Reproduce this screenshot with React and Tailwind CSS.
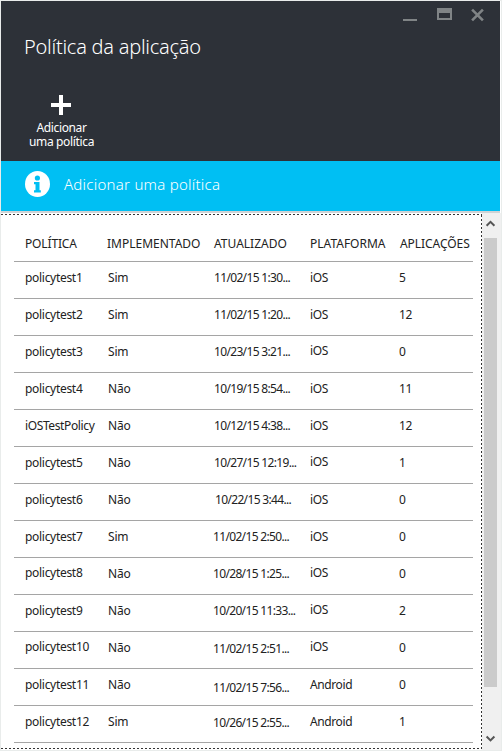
const COLS = "grid grid-cols-[83px_106px_96px_90px_1fr] pl-[11px]";

// nameC, dateC and osC fine-tune the position of single cells
const rows = [
  { name: "policytest1", on: "Sim", date: "11/02/15 1:30...", os: "iOS", apps: "5" },
  { name: "policytest2", on: "Sim", date: "11/02/15 1:20...", os: "iOS", apps: "12" },
  { name: "policytest3", on: "Sim", date: "10/23/15 3:21...", os: "iOS", apps: "0", osC: "-mt-px" },
  { name: "policytest4", on: "Não", date: "10/19/15 8:54...", os: "iOS", apps: "11" },
  { name: "iOSTestPolicy", on: "Não", date: "10/12/15 4:38...", os: "iOS", apps: "12", nameC: "tracking-[-0.38px]" },
  { name: "policytest5", on: "Não", date: "10/27/15 12:19...", os: "iOS", apps: "1", osC: "-mt-px" },
  { name: "policytest6", on: "Não", date: "10/22/15 3:44...", os: "iOS", apps: "0", dateC: "pl-px" },
  { name: "policytest7", on: "Sim", date: "11/02/15 2:50...", os: "iOS", apps: "0", dateC: "-ml-px" },
  { name: "policytest8", on: "Não", date: "10/28/15 1:25...", os: "iOS", apps: "0", nameC: "-mt-px tracking-[-0.3px]", dateC: "-ml-px", osC: "-mt-px" },
  { name: "policytest9", on: "Não", date: "10/20/15 11:33...", os: "iOS", apps: "2", dateC: "-ml-px", osC: "-mt-px" },
  { name: "policytest10", on: "Não", date: "11/02/15 2:51...", os: "iOS", apps: "0", nameC: "-mt-px tracking-[-0.3px]", dateC: "-ml-px mt-px", osC: "-mt-px" },
  { name: "policytest11", on: "Não", date: "11/02/15 7:56...", os: "Android", apps: "0", dateC: "-ml-px mt-[3px]" },
  { name: "policytest12", on: "Sim", date: "10/26/15 2:55...", os: "Android", apps: "1", dateC: "-ml-px mt-px" },
];

function WindowButtons() {
  return (
    <svg width="82" height="16" viewBox="0 0 82 16" className="block" shapeRendering="crispEdges">
      <rect x="1" y="12" width="14" height="2" fill="#808486" />
      <path d="M35 1h15v12h-15zM37 6v5h11V6z" fill="#808486" fillRule="evenodd" />
      <path d="M70.1 2.6L80.9 13.4M80.9 2.6L70.1 13.4" stroke="#808486" strokeWidth="2.6" shapeRendering="auto" />
    </svg>
  );
}

function Header() {
  return (
    <header className="h-[160px] bg-[#2d3138] text-white">
      <div className="flex justify-end pt-[6px] pr-[16px]">
        <WindowButtons />
      </div>
      <h1 className="ml-[23px] mt-[10px] h-[28px] whitespace-nowrap text-[20px] font-light leading-[28px] tracking-[-0.25px]">
        Política da aplicação
      </h1>
      <button className="ml-[20px] mt-[34px] flex w-[80px] flex-col items-center">
        <svg width="20" height="20" viewBox="0 0 20 20" shapeRendering="crispEdges">
          <path d="M8 0h4v8h8v4h-8v8H8v-8H0V8h8z" fill="#fff" />
        </svg>
        <span className="ml-px mt-[6px] whitespace-nowrap text-center text-[12px] leading-[14px] tracking-[-0.35px]">
          Adicionar
          <br />
          uma política
        </span>
      </button>
    </header>
  );
}

function Banner() {
  return (
    <div className="flex h-[52px] items-center border-b-2 border-[#cfd3d5] bg-[#00bff3] pl-[24px] text-white">
      <svg width="25" height="26" viewBox="0 0 25 26" className="mt-[-4px]">
        <ellipse cx="12.5" cy="13" rx="12.5" ry="13" fill="#fff" />
        <circle cx="12.4" cy="7" r="2.6" fill="#00bff3" />
        <path d="M9 11h5.5v8.2h1.3v2.3H9v-2.3h1.5v-5.9H9z" fill="#00bff3" />
      </svg>
      <span className="ml-[14px] mt-[-4px] whitespace-nowrap text-[15px] font-light leading-[20px] tracking-[0.25px]">
        Adicionar uma política
      </span>
    </div>
  );
}

function PolicyTable() {
  return (
    <div className="ml-[13px] w-[459px] text-[12px] leading-[16px] text-[#222]">
      <div className={COLS + " h-[47px] border-b border-[#a5a5a5] pt-[21px] whitespace-nowrap"}>
        <span className="tracking-[-0.15px]">POLÍTICA</span>
        <span className="-ml-px">IMPLEMENTADO</span>
        <span>ATUALIZADO</span>
        <span>PLATAFORMA</span>
        <span className="tracking-[-0.05px]">APLICAÇÕES</span>
      </div>
      {rows.map((r) => (
        <div key={r.name} className={COLS + " h-[37px] border-b border-[#a5a5a5] pt-[8px] whitespace-nowrap"}>
          <span className={r.nameC || "tracking-[-0.3px]"}>{r.name}</span>
          <span className="tracking-[-0.2px]">{r.on}</span>
          <span className={"tracking-[-0.66px] " + (r.dateC || "")}>{r.date}</span>
          <span className={"tracking-[-0.4px] " + (r.osC || "")}>{r.os}</span>
          <span className="-ml-px tracking-[-0.3px]">{r.apps}</span>
        </div>
      ))}
    </div>
  );
}

function Scrollbar() {
  return (
    <div className="flex w-[19px] flex-col items-center bg-[#f0f0f0] pr-[2px]">
      <svg width="13" height="25" viewBox="0 0 13 25" className="block">
        <path d="M2.6 12.8L6.5 8.9L10.4 12.8" fill="none" stroke="#555" strokeWidth="2" />
      </svg>
      <div className="h-[449px] w-[13px] bg-[#cbcbcb]" />
      <div className="flex-1" />
      <svg width="13" height="19" viewBox="0 0 13 19" className="block">
        <path d="M2.6 5.5L6.5 9.4L10.4 5.5" fill="none" stroke="#555" strokeWidth="2" />
      </svg>
    </div>
  );
}

export default function App() {
  return (
    <div className="flex h-[751px] w-[502px] flex-col border border-[#e9eceb] bg-white font-['Noto_Sans','Open_Sans',sans-serif]">
      <div className="w-[499px]">
        <Header />
        <Banner />
      </div>
      <div className="flex h-[537px]">
        <div className="flex w-[481px] flex-col pt-px">
          <div className="h-px bg-[repeating-linear-gradient(90deg,#333_0px,#333_2px,#fff_2px,#fff_4px)]" />
          <div className="flex h-[533px] justify-between">
            <PolicyTable />
            <div className="w-px bg-[repeating-linear-gradient(180deg,#333_0px,#333_2px,#fff_2px,#fff_4px)]" />
          </div>
          <div className="h-px bg-[repeating-linear-gradient(90deg,#333_0px,#333_2px,#fff_2px,#fff_4px)]" />
        </div>
        <Scrollbar />
      </div>
    </div>
  );
}
